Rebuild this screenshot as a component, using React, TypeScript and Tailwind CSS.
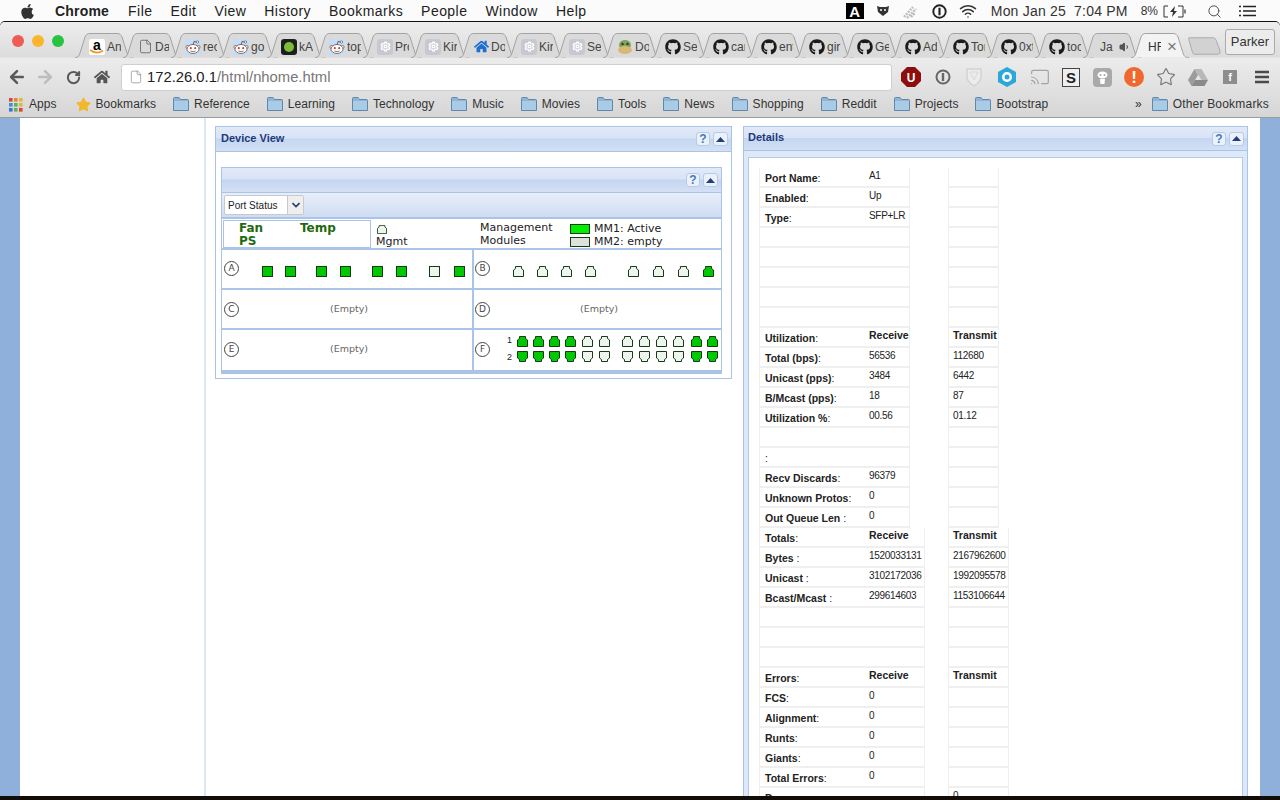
import React from 'react';
import { ArrowLeft, ArrowRight, RotateCw, Star, Search, Wifi, Cast, File, Settings, Volume1 } from 'lucide-react';
import { FaApple, FaGithub, FaHome, FaStar } from 'react-icons/fa';

const ui = { fontFamily: '"Liberation Sans", Arial, sans-serif' };

/* ---------- little drawings ---------- */

const RedditIcon = () => (
  <svg width="16" height="16" viewBox="0 0 16 16">
    <rect width="16" height="16" fill="#c9dcf3" />
    <path d="M8 6 L9 2.5 L12 3" fill="none" stroke="#444" strokeWidth="0.8" />
    <circle cx="12.5" cy="3" r="1.2" fill="#fff" stroke="#444" strokeWidth="0.6" />
    <circle cx="2.5" cy="8" r="1.6" fill="#fff" stroke="#444" strokeWidth="0.6" />
    <circle cx="13.5" cy="8" r="1.6" fill="#fff" stroke="#444" strokeWidth="0.6" />
    <ellipse cx="8" cy="10" rx="6" ry="4.5" fill="#fff" stroke="#444" strokeWidth="0.7" />
    <circle cx="5.8" cy="9.2" r="1.1" fill="#e0441c" />
    <circle cx="10.2" cy="9.2" r="1.1" fill="#e0441c" />
    <path d="M5.5 12 Q8 13.5 10.5 12" fill="none" stroke="#444" strokeWidth="0.7" />
  </svg>
);

const GearIcon = () => (
  <span className="flex h-[16px] w-[16px] items-center justify-center rounded-[3px] bg-[#c6cad0]">
    <Settings size={11} color="#fff" strokeWidth={3} />
  </span>
);

const Favicon = ({ kind }: { kind: string }) => {
  if (kind === 'amazon')
    return (
      <span className="relative flex h-[16px] w-[16px] justify-center rounded-[2px] bg-white text-[14px] font-bold leading-[12px] text-black">
        a
        <svg className="absolute bottom-0 left-0" width="16" height="6" viewBox="0 0 16 6">
          <path d="M1 1 Q8 6 14 1.5" fill="none" stroke="#f29a1f" strokeWidth="1.6" />
        </svg>
      </span>
    );
  if (kind === 'doc') return <File size={15} color="#555" strokeWidth={1.2} />;
  if (kind === 'reddit') return <RedditIcon />;
  if (kind === 'ka')
    return (
      <span className="flex h-[16px] w-[16px] items-center justify-center rounded-[3px] bg-[#1c1f1c]">
        <span className="h-[10px] w-[10px] rounded-full bg-[#7fba3a]" />
      </span>
    );
  if (kind === 'gear') return <GearIcon />;
  if (kind === 'house') return <FaHome size={15} color="#1f6fd0" />;
  if (kind === 'frog')
    return (
      <svg width="16" height="16" viewBox="0 0 16 16">
        <ellipse cx="8" cy="6" rx="6" ry="5" fill="#7da654" />
        <ellipse cx="8" cy="11" rx="7" ry="4" fill="#d8b878" />
        <circle cx="5.5" cy="5" r="1.2" fill="#333" />
        <circle cx="10.5" cy="5" r="1.2" fill="#333" />
      </svg>
    );
  if (kind === 'gh') return <FaGithub size={16} color="#1b1b1b" />;
  return <span className="w-[3px]" />;
};

const tabs = [
  { kind: 'amazon', label: 'An' },
  { kind: 'doc', label: 'Da' },
  { kind: 'reddit', label: 'rec' },
  { kind: 'reddit', label: 'go' },
  { kind: 'ka', label: 'kA' },
  { kind: 'reddit', label: 'top' },
  { kind: 'gear', label: 'Pro' },
  { kind: 'gear', label: 'Kir' },
  { kind: 'house', label: 'Do' },
  { kind: 'gear', label: 'Kir' },
  { kind: 'gear', label: 'Se' },
  { kind: 'frog', label: 'Do' },
  { kind: 'gh', label: 'Se' },
  { kind: 'gh', label: 'car' },
  { kind: 'gh', label: 'ent' },
  { kind: 'gh', label: 'gir' },
  { kind: 'gh', label: 'Ge' },
  { kind: 'gh', label: 'Ad' },
  { kind: 'gh', label: 'Tor' },
  { kind: 'gh', label: '0xt' },
  { kind: 'gh', label: 'toc' },
];

const TabShape = ({ active }: { active?: boolean }) => (
  <svg className="absolute left-0 top-0" width="58" height="25" viewBox="0 0 58 25">
    <path
      d="M0 24.5 C3 24.5 4 23 5 20 L10 4 C11 1.5 12.5 .5 15 .5 H42 C44.5 .5 46 1.5 47 4 L52 20 C53 23 54 24.5 58 24.5"
      fill={active ? '#f3f3f3' : '#dadada'}
      stroke="#a3a3a3"
      strokeWidth="1"
    />
  </svg>
);

const Tab = ({ kind, label }: { kind: string; label: string }) => (
  <div className="relative h-[25px] w-[48px] shrink-0">
    <TabShape />
    <div className="relative flex h-[25px] items-center pl-[14px] pt-[2px]">
      <span className="flex w-[16px] shrink-0 justify-center">
        <Favicon kind={kind} />
      </span>
      <span className="ml-[2px] w-[14px] overflow-hidden whitespace-nowrap text-[12px] text-[#444]">{label}</span>
    </div>
  </div>
);

const Folder = () => (
  <svg width="16" height="14" viewBox="0 0 16 14" className="shrink-0">
    <path d="M.5 13.5 V1.5 Q.5 .5 1.5 .5 H6 L7.5 2.5 H14.5 Q15.5 2.5 15.5 3.5 V13.5 Z" fill="#8db6d8" stroke="#5f88ab" />
    <rect x="1" y="4" width="14" height="9" fill="#a9cbe6" />
  </svg>
);

const AppsGrid = () => (
  <svg width="15" height="15" viewBox="0 0 15 15" className="shrink-0">
    {[0, 1, 2].map((r) =>
      [0, 1, 2].map((c) => (
        <rect
          key={`${r}-${c}`}
          x={1 + c * 5}
          y={1 + r * 5}
          width="3.6"
          height="3.6"
          fill={[['#d9453d', '#e8853a', '#e0b93a'], ['#3f8fd8', '#5db35a', '#e0b93a'], ['#3f6fd8', '#5db35a', '#d9453d']][r][c]}
        />
      ))
    )}
  </svg>
);

const bookmarks = ['Reference', 'Learning', 'Technology', 'Music', 'Movies', 'Tools', 'News', 'Shopping', 'Reddit', 'Projects', 'Bootstrap'];

/* ---------- mac menu bar ---------- */

const MenuBar = () => (
  <div className="flex h-[22px] shrink-0 items-center bg-[#fbfbfb] text-[14px] text-[#222]">
    <FaApple size={17} color="#333" className="ml-[19px]" />
    <span className="ml-[19px] font-bold tracking-[0.2px]">Chrome</span>
    <div className="ml-[19px] flex gap-[18px] tracking-[0.45px]">
      {['File', 'Edit', 'View', 'History', 'Bookmarks', 'People', 'Window', 'Help'].map((m) => (
        <span key={m}>{m}</span>
      ))}
    </div>
    <div className="ml-auto flex items-center">
      <span className="flex h-[16px] w-[18px] items-end justify-center bg-black text-[15px] font-bold leading-[15px] text-white">A</span>
      <svg width="12" height="12" viewBox="0 0 12 12" className="ml-[13px]">
        <path d="M0 1 L3 2 H9 L12 1 L11 7 L6 11 L1 7 Z" fill="#333" />
        <circle cx="4" cy="5" r="1" fill="#fff" />
        <circle cx="8" cy="5" r="1" fill="#fff" />
      </svg>
      <svg width="16" height="16" viewBox="0 0 16 16" className="ml-[13px]">
        <path d="M2 14 L11 4 M5 15 L14 6 M9 14 L13 10" stroke="#bdbdbd" strokeWidth="2.4" strokeDasharray="2 1" />
      </svg>
      <svg width="15" height="15" viewBox="0 0 14 14" className="ml-[14px]">
        <circle cx="7" cy="7" r="5.8" fill="none" stroke="#222" strokeWidth="1.8" />
        <path d="M7 3.5 V10.5" stroke="#222" strokeWidth="2" />
      </svg>
      <Wifi size={18} color="#333" strokeWidth={2} className="ml-[12px]" />
      <span className="ml-[14px] tracking-[0.2px] text-[#333]">Mon Jan 25&nbsp;&nbsp;7:04 PM</span>
      <span className="ml-[13px] text-[12px] text-[#333]">8%</span>
      <svg width="24" height="13" viewBox="0 0 24 13" className="ml-[5px]">
        <path d="M5 1 H1 V12 H5 M15 1 H20 V12 H15" fill="none" stroke="#333" strokeWidth="1" />
        <path d="M22 4.5 V8.5" stroke="#333" strokeWidth="1.2" />
        <path d="M12 1 L7 7 H10 L9 12 L14 6 H11 Z" fill="#333" />
      </svg>
      <Search size={15} color="#444" strokeWidth={1.5} className="ml-[20px]" />
      <svg width="17" height="12" viewBox="0 0 17 12" className="ml-[17px] mr-[24px]">
        <path d="M4 1.5 H17 M4 6 H17 M4 10.5 H17 M0 1.5 H2 M0 6 H2 M0 10.5 H2" stroke="#222" strokeWidth="1.6" />
      </svg>
    </div>
  </div>
);

/* ---------- chrome browser frame ---------- */

const TabStrip = () => (
  <div className="flex h-[36px] shrink-0 items-end">
    <div className="flex h-[36px] w-[75px] shrink-0 items-start gap-[8px] pl-[12px] pt-[13px]">
      <span className="h-[12px] w-[12px] rounded-full bg-[#ee5c55]" />
      <span className="h-[12px] w-[12px] rounded-full bg-[#fbb62c]" />
      <span className="h-[12px] w-[12px] rounded-full bg-[#27c341]" />
    </div>
    {tabs.map((t, i) => (
      <Tab key={i} kind={t.kind} label={t.label} />
    ))}
    <div className="relative h-[25px] w-[48px] shrink-0">
      <TabShape />
      <div className="relative flex h-[25px] items-center pl-[17px] pt-[2px] text-[12px] text-[#444]">
        Ja
        <Volume1 size={12} color="#555" fill="#555" className="ml-[6px]" />
      </div>
    </div>
    <div className="relative h-[25px] w-[57px] shrink-0">
      <TabShape active />
      <div className="relative flex h-[25px] items-center pl-[17px] pt-[2px] text-[12px] text-[#333]">
        <span className="w-[13px] overflow-hidden">HF</span>
        <span className="ml-[6px] text-[17px] leading-none text-[#777]">×</span>
      </div>
    </div>
    <svg width="33" height="18" viewBox="0 0 34 18" className="mb-[3px] shrink-0">
      <path d="M1 .5 H26 Q28 .5 29 3 L33 14 Q34 17 31 17.5 H7 Q5 17.5 4.5 15 L1 3 Q.5 .5 1 .5 Z" fill="#d2d2d2" stroke="#a9a9a9" />
    </svg>
    <div className="mb-[3px] ml-[4px] flex h-[26px] w-[50px] shrink-0 items-center justify-center rounded-[3px] border border-[#aaa] bg-[#ececec] text-[13px] text-[#333]">
      Parker
    </div>
  </div>
);

const Toolbar = () => (
  <div className="flex h-[34px] shrink-0 items-center pt-[4px]">
    <ArrowLeft size={20} color="#5a5a5a" strokeWidth={3} className="ml-[7px] shrink-0" />
    <ArrowRight size={20} color="#bdbdbd" strokeWidth={3} className="ml-[8px] shrink-0" />
    <RotateCw size={15} color="#5a5a5a" strokeWidth={3.2} className="ml-[11px] shrink-0" />
    <FaHome size={16} color="#555" className="ml-[13px] shrink-0" />
    <div className="ml-[11px] flex h-[27px] w-[771px] shrink-0 items-center rounded-[3px] border border-[#cfcfcf] bg-white pl-[7px] text-[14.8px]">
      <File size={14} color="#888" strokeWidth={1.2} />
      <span className="ml-[4px] text-[#222]">172.26.0.1</span>
      <span className="text-[#777]">/html/nhome.html</span>
    </div>
    <svg width="20" height="20" viewBox="0 0 20 20" className="ml-[9px] shrink-0">
      <path d="M6 0 H14 L20 6 V14 L14 20 H6 L0 14 V6 Z" fill="#8e0d0d" />
      <text x="10" y="14.5" textAnchor="middle" fontSize="12" fontWeight="700" fill="#fff" fontFamily="Liberation Sans">U</text>
    </svg>
    <svg width="16" height="16" viewBox="0 0 16 16" className="ml-[14px] shrink-0">
      <circle cx="8" cy="8" r="6.5" fill="none" stroke="#666" strokeWidth="2" />
      <path d="M8 4 V12" stroke="#666" strokeWidth="2.4" />
    </svg>
    <svg width="16" height="20" viewBox="0 0 16 20" className="ml-[15px] shrink-0">
      <path d="M1 2 H15 V10 Q15 15 8 19 Q1 15 1 10 Z" fill="#ececec" stroke="#d2d2d2" strokeWidth="1.4" />
      <path d="M4 5 H12 L8 13 Z" fill="none" stroke="#d8d8d8" />
    </svg>
    <svg width="18" height="20" viewBox="0 0 18 20" className="ml-[16px] shrink-0">
      <path d="M9 0 L18 5 V15 L9 20 L0 15 V5 Z" fill="#2ba7dc" />
      <circle cx="9" cy="10" r="5" fill="#fff" />
      <circle cx="9" cy="10" r="2.5" fill="#2ba7dc" />
    </svg>
    <Cast size={20} color="#a3a3a3" strokeWidth={1.4} className="ml-[14px] shrink-0" />
    <span className="ml-[12px] flex h-[19px] w-[18px] shrink-0 items-center justify-center border border-[#444] bg-[#efefef] text-[15px] font-bold leading-none text-[#222]">S</span>
    <span className="ml-[13px] flex h-[19px] w-[19px] shrink-0 items-center justify-center rounded-[4px] bg-[#a9a9a9]">
      <svg width="13" height="15" viewBox="0 0 13 15">
        <ellipse cx="6.5" cy="5" rx="5" ry="3.6" fill="#fff" />
        <path d="M4 9 H9 L8.5 14 H4.5 Z" fill="#fff" />
        <circle cx="4.5" cy="5" r="1" fill="#a9a9a9" />
        <circle cx="8.5" cy="5" r="1" fill="#a9a9a9" />
      </svg>
    </span>
    <span className="ml-[12px] flex h-[20px] w-[20px] shrink-0 items-center justify-center rounded-full bg-[#f0682d] text-[17px] font-bold leading-none text-white">!</span>
    <Star size={20} color="#777" strokeWidth={1.4} className="ml-[12px] shrink-0" />
    <svg width="20" height="17" viewBox="0 0 20 17" className="ml-[12px] shrink-0">
      <path d="M6.5 0 H13.5 L20 11 H13.5 Z" fill="#b8b8b8" />
      <path d="M6.5 0 L0 11 L3.5 17 L10 6 Z" fill="#9c9c9c" />
      <path d="M3.5 17 H16.5 L20 11 H7 Z" fill="#8a8a8a" />
    </svg>
    <span className="ml-[15px] flex h-[14px] w-[14px] shrink-0 items-center justify-center bg-[#8d8d8d] text-[11px] font-bold leading-none text-white">f</span>
    <svg width="14" height="14" viewBox="0 0 14 14" className="ml-[18px] shrink-0">
      <path d="M0 2 H14 M0 7 H14 M0 12 H14" stroke="#4a4a4a" strokeWidth="2.6" />
    </svg>
  </div>
);

const BookmarkBar = () => (
  <div className="flex h-[25px] shrink-0 items-center pb-[1px] pl-[8px] text-[12px] tracking-[0.05px] text-[#333]">
    <AppsGrid />
    <span className="ml-[6px]">Apps</span>
    <FaStar size={15} color="#f3b72a" className="ml-[19px] shrink-0" />
    <span className="ml-[5px]">Bookmarks</span>
    <div className="ml-[17px] flex gap-[17px]">
      {bookmarks.map((b) => (
        <span key={b} className="flex items-center gap-[5px]">
          <Folder />
          {b}
        </span>
      ))}
    </div>
    <div className="ml-auto flex items-center pr-[11px]">
      <span className="mr-[10px] text-[12px]">»</span>
      <span className="flex items-center gap-[5px] tracking-[0.2px]">
        <Folder />
        Other Bookmarks
      </span>
    </div>
  </div>
);

/* ---------- HP switch web ui bits ---------- */

const headerBg = 'bg-[linear-gradient(#e2eaf9_0%,#d8e3f6_46%,#c5d6f0_50%,#d3e0f5_100%)]';

const HeadButtons = () => (
  <div className="flex gap-[3px]">
    <span className="flex h-[14px] w-[14px] items-center justify-center rounded-[3px] border border-[#b5cbe8] bg-[#eaf1fb] text-[12px] font-bold leading-none text-[#4a7ab5]">?</span>
    <span className="flex h-[14px] w-[15px] items-center justify-center rounded-[3px] border border-[#b5cbe8] bg-[#eaf1fb]">
      <svg width="9" height="5" viewBox="0 0 9 5">
        <path d="M4.5 0 L9 5 H0 Z" fill="#1f3f80" />
      </svg>
    </span>
  </div>
);

const PanelHeader = ({ title, h, pad = 'pl-[5px]' }: { title?: string; h: string; pad?: string }) => (
  <div className={`flex ${h} shrink-0 items-center justify-between border-b border-[#a9c4e6] ${headerBg} ${pad} pr-[3px]`}>
    <span className="pb-[2px] text-[11px] font-bold text-[#1d3a7c]">{title}</span>
    <HeadButtons />
  </div>
);

// ports are a box with a narrower cap on the latch side, like an RJ45 socket
const Port = ({ on, down, className }: { on: boolean; down?: boolean; className: string }) => (
  <svg width="11" height="11" viewBox="0 0 11 11" className={`shrink-0 ${className}`}>
    <path
      d={down ? 'M.5 .5 H10.5 V7 L8.5 8.5 V10.5 H2.5 V8.5 L.5 7 Z' : 'M.5 10.5 V4 L2.5 2.5 V.5 H8.5 V2.5 L10.5 4 V10.5 Z'}
      fill={on ? '#00c800' : '#eef4ee'}
      stroke="#163a16"
      strokeWidth="1"
      strokeLinejoin="miter"
    />
  </svg>
);

const Square = ({ on, className }: { on: boolean; className: string }) => (
  <span className={`h-[11px] w-[11px] shrink-0 border border-[#163a16] ${on ? 'bg-[#00c800]' : 'bg-[#eef4ee]'} ${className}`} />
);

const Letter = ({ c }: { c: string }) => (
  <span className="flex h-[15px] w-[15px] shrink-0 items-center justify-center rounded-full border border-[#444] text-[9px] leading-none text-[#444]" style={{ fontFamily: '"DejaVu Sans", sans-serif' }}>
    {c}
  </span>
);

const Empty = ({ className }: { className: string }) => (
  <span className={`text-[9.5px] text-[#666] ${className}`} style={{ fontFamily: '"DejaVu Sans", sans-serif' }}>(Empty)</span>
);

const slotA = [
  { on: true, m: 'ml-[23px]' },
  { on: true, m: 'ml-[12px]' },
  { on: true, m: 'ml-[20px]' },
  { on: true, m: 'ml-[13px]' },
  { on: true, m: 'ml-[21px]' },
  { on: true, m: 'ml-[13px]' },
  { on: false, m: 'ml-[22px]' },
  { on: true, m: 'ml-[14px]' },
];

const slotB = [
  { on: false, m: 'ml-[23px]' },
  { on: false, m: 'ml-[13px]' },
  { on: false, m: 'ml-[13px]' },
  { on: false, m: 'ml-[13px]' },
  { on: false, m: 'ml-[32px]' },
  { on: false, m: 'ml-[14px]' },
  { on: false, m: 'ml-[14px]' },
  { on: true, m: 'ml-[14px]' },
];

const slotF = [
  { on: true, m: '' },
  { on: true, m: 'ml-[5px]' },
  { on: true, m: 'ml-[5px]' },
  { on: true, m: 'ml-[5px]' },
  { on: false, m: 'ml-[6px]' },
  { on: false, m: 'ml-[6px]' },
  { on: false, m: 'ml-[12px]' },
  { on: false, m: 'ml-[6px]' },
  { on: false, m: 'ml-[6px]' },
  { on: false, m: 'ml-[6px]' },
  { on: true, m: 'ml-[7px]' },
  { on: true, m: 'ml-[5px]' },
];

const DeviceView = () => (
  <div className="mt-[8px] flex h-[253px] w-[517px] shrink-0 flex-col border border-[#a9c4e6] bg-white">
    <PanelHeader title="Device View" h="h-[25px]" />
    <div className="pl-[5px] pt-[15px]">
      <div className="flex w-[501px] flex-col border-x border-t border-[#a9c4e6]">
        <PanelHeader h="h-[25px]" />
        <div className="flex h-[26px] items-center border-b-2 border-[#a9c4e6] bg-[linear-gradient(#e8effb,#cfdcf2)] pl-[2px]">
          <div className="flex h-[20px] w-[80px] items-stretch rounded-[2px] border border-[#c9c9c9] bg-white">
            <span className="flex flex-1 items-center pl-[3px] pt-[1px] text-[10px] text-[#222]">Port Status</span>
            <span className="flex w-[16px] items-center justify-center border-l border-[#c9c9c9] bg-[#eee]">
              <svg width="8" height="6" viewBox="0 0 8 6">
                <path d="M.5 1 L4 4.5 L7.5 1" fill="none" stroke="#1f3f70" strokeWidth="1.6" />
              </svg>
            </span>
          </div>
        </div>

        <div className="flex h-[31px] border-b-2 border-[#a9c4e6] text-[11px] text-[#222]" style={{ fontFamily: '"DejaVu Sans", sans-serif' }}>
          <div className="ml-[1px] mt-[1px] grid h-[28px] w-[148px] shrink-0 grid-cols-[61px_1fr] border border-[#a9c4e6] pl-[15px] pt-[1px] text-[12px] font-bold leading-[13px] text-[#1f6a0e]">
            <span>Fan</span>
            <span>Temp</span>
            <span>PS</span>
          </div>
          <div className="ml-[5px] flex w-[104px] shrink-0 flex-col pt-[6px] leading-[13px]">
            <svg width="12" height="11" viewBox="0 0 12 11">
              <path d="M.5 10.5 V4 L2.5 2.5 V.5 H9.5 V2.5 L11.5 4 V10.5 Z" fill="#eef4ee" stroke="#163a16" />
            </svg>
            <span className="mt-[1px]">Mgmt</span>
          </div>
          <div className="w-[90px] shrink-0 pt-[3px] leading-[12.5px]">
            Management
            <br />
            Modules
          </div>
          <div className="flex flex-col gap-[2px] pt-[4px] leading-[10px]">
            <span className="flex items-center">
              <span className="h-[10px] w-[20px] border border-[#163a16] bg-[#00ee00]" />
              <span className="ml-[4px] pt-[1px]">MM1: Active</span>
            </span>
            <span className="flex items-center">
              <span className="h-[10px] w-[20px] border border-[#163a16] bg-[#dde2dd]" />
              <span className="ml-[4px] pt-[1px]">MM2: empty</span>
            </span>
          </div>
        </div>

        <div className="flex h-[40px] border-b-2 border-[#a9c4e6]">
          <div className="flex w-[252px] shrink-0 items-center border-r-2 border-[#a9c4e6] pl-[2px]">
            <span className="mb-[1px]"><Letter c="A" /></span>
            {slotA.map((p, i) => (
              <Square key={i} on={p.on} className={`${p.m} mt-[5px]`} />
            ))}
          </div>
          <div className="flex items-center pl-[1px]">
            <span className="mb-[1px]"><Letter c="B" /></span>
            {slotB.map((p, i) => (
              <Port key={i} on={p.on} className={`${p.m} mt-[5px]`} />
            ))}
          </div>
        </div>

        <div className="flex h-[40px] border-b-2 border-[#a9c4e6]">
          <div className="flex w-[252px] shrink-0 items-center border-r-2 border-[#a9c4e6] pl-[2px]">
            <Letter c="C" />
            <Empty className="ml-[91px]" />
          </div>
          <div className="flex items-center pl-[1px]">
            <Letter c="D" />
            <Empty className="ml-[90px]" />
          </div>
        </div>

        <div className="flex h-[44px] border-b-4 border-[#a9c4e6]">
          <div className="flex w-[252px] shrink-0 items-center border-r-2 border-[#a9c4e6] pb-[2px] pl-[2px]">
            <Letter c="E" />
            <Empty className="ml-[91px]" />
          </div>
          <div className="flex items-center pb-[2px] pl-[1px]">
            <Letter c="F" />
            <div className="ml-[17px] flex w-[10px] flex-col text-[9px] leading-[17px] text-[#222]">
              <span>1</span>
              <span>2</span>
            </div>
            <div className="flex flex-col gap-[4px]">
              <div className="flex">
                {slotF.map((p, i) => (
                  <Port key={i} on={p.on} className={p.m} />
                ))}
              </div>
              <div className="flex">
                {slotF.map((p, i) => (
                  <Port key={i} on={p.on} down className={p.m} />
                ))}
              </div>
            </div>
          </div>
        </div>
      </div>
    </div>
  </div>
);

type Row = [string, string, string];

const portRows: Row[] = [
  ['Port Name:', 'A1', ''],
  ['Enabled:', 'Up', ''],
  ['Type:', 'SFP+LR', ''],
  ['', '', ''],
  ['', '', ''],
  ['', '', ''],
  ['', '', ''],
  ['', '', ''],
  ['Utilization:', '*Receive', '*Transmit'],
  ['Total (bps):', '56536', '112680'],
  ['Unicast (pps):', '3484', '6442'],
  ['B/Mcast (pps):', '18', '87'],
  ['Utilization %:', '00.56', '01.12'],
  ['', '', ''],
  [':', '', ''],
  ['Recv Discards:', '96379', ''],
  ['Unknown Protos:', '0', ''],
  ['Out Queue Len :', '0', ''],
];

const totalRows: Row[] = [
  ['Totals:', '*Receive', '*Transmit'],
  ['Bytes :', '1520033131', '2167962600'],
  ['Unicast :', '3102172036', '1992095578'],
  ['Bcast/Mcast :', '299614603', '1153106644'],
  ['', '', ''],
  ['', '', ''],
  ['', '', ''],
  ['Errors:', '*Receive', '*Transmit'],
  ['FCS:', '0', ''],
  ['Alignment:', '0', ''],
  ['Runts:', '0', ''],
  ['Giants:', '0', ''],
  ['Total Errors:', '0', ''],
  ['Drops:', '', '0'],
];

const Val = ({ v }: { v: string }) =>
  v.startsWith('*') ? <b className="text-[10.5px] tracking-normal">{v.slice(1)}</b> : <>{v}</>;

const StatTable = ({ rows, leftW, rightW, gap }: { rows: Row[]; leftW: string; rightW: string; gap: string }) => (
  <div className={`flex ${gap} text-[#222]`}>
    <div className={`${leftW} shrink-0`}>
      {rows.map((r, i) => (
        <div key={i} className="flex h-[20px] border-x border-b-2 border-[#efefef]">
          <span className="w-[109px] shrink-0 whitespace-nowrap pl-[5px] pt-[3px] text-[10.5px] leading-[14px]">
            <b>{r[0].slice(0, -1)}</b>
            {r[0].slice(-1)}
          </span>
          <span className="whitespace-nowrap pt-[1px] text-[10px] leading-[13px] tracking-[-0.3px]">
            <Val v={r[1]} />
          </span>
        </div>
      ))}
    </div>
    <div className={`${rightW} shrink-0`}>
      {rows.map((r, i) => (
        <div key={i} className="flex h-[20px] whitespace-nowrap border-x border-b-2 border-[#efefef] pl-[4px] pt-[1px] text-[10px] leading-[13px] tracking-[-0.3px]">
          <Val v={r[2]} />
        </div>
      ))}
    </div>
  </div>
);

const Details = () => (
  <div className="ml-[11px] mt-[8px] flex h-[700px] w-[505px] shrink-0 flex-col border border-[#a9c4e6] bg-[#dde8f8]">
    <PanelHeader title="Details" h="h-[24px]" pad="pl-[4px]" />
    <div className="mx-[4px] mt-[6px] flex-1 border border-[#b4cae8] bg-white pl-[10px] pt-[10px]">
      <StatTable rows={portRows} leftW="w-[151px]" rightW="w-[51px]" gap="gap-[38px]" />
      <StatTable rows={totalRows} leftW="w-[166px]" rightW="w-[61px]" gap="gap-[23px]" />
    </div>
  </div>
);

export default function App() {
  return (
    <div className="flex h-[800px] w-[1280px] flex-col overflow-hidden bg-white" style={ui}>
      <MenuBar />
      <div className="flex h-[96px] shrink-0 flex-col rounded-t-[5px] border-b border-[#9c9c9c] bg-[linear-gradient(#eeeeee,#dcdcdc_37%,#ececec_38%,#d6d6d6)] shadow-[0_-1px_0_#111]">
        <TabStrip />
        <Toolbar />
        <BookmarkBar />
      </div>
      <div className="flex min-h-0 flex-1 overflow-hidden">
        <div className="w-[20px] shrink-0 bg-[#8fb0da]" />
        <div className="w-[186px] shrink-0 border-r-2 border-[#dde6f3] bg-white" />
        <div className="ml-[9px] flex">
          <DeviceView />
          <Details />
        </div>
        <div className="ml-auto w-[20px] shrink-0 bg-[#8fb0da]" />
      </div>
      <div className="h-[4px] shrink-0 bg-[#120d08]" />
    </div>
  );
}
